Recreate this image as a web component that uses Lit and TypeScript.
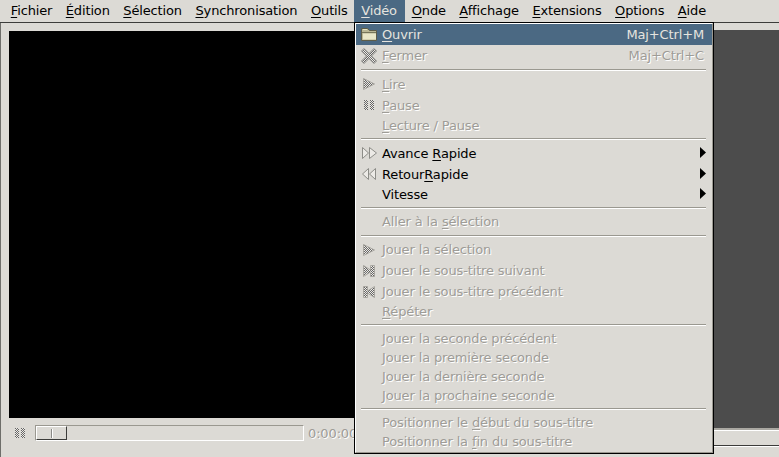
import { LitElement, html, css, svg } from "lit";
import { customElement } from "lit/decorators.js";

const stipple = (color = "#777773") => svg`<defs><pattern id="st" width="2" height="2" patternUnits="userSpaceOnUse"><rect width="2" height="2" fill="#eceae6"/><rect width="1" height="1" fill="${color}"/><rect x="1" y="1" width="1" height="1" fill="${color}"/></pattern></defs>`;

const ICONS: Record<string, unknown> = {
  folder: svg`<path d="M0.5 1.5H6.5L8.5 3.5H15.5V13.5H0.5Z" fill="#b9b794" stroke="#5e5d48"/><path d="M2 6.5L15 6.5V12.5H2Z" fill="#e9e7c8"/><path d="M1 5.5H15" stroke="#77765a"/><path d="M2 2.5H6" stroke="#e4e2c4"/>`,
  close: svg`${stipple("#444")}<path d="M3 0.5L8 5.5L13 0.5L15.5 3L10.5 8L15.5 13L13 15.5L8 10.5L3 15.5L0.5 13L5.5 8L0.5 3Z" fill="url(#st)" stroke="#8a8a86"/>`,
  play: svg`${stipple("#9a9a96")}<path d="M2.5 2.5L13.5 8L2.5 13.5Z" fill="url(#st)" stroke="#a8a6a0"/>`,
  pause: svg`${stipple("#666")}<rect x="3" y="3" width="4" height="10" fill="url(#st)" /><rect x="9" y="3" width="4" height="10" fill="url(#st)"/>`,
  forward: svg`<path d="M1.5 2.5L7.5 8L1.5 13.5Z M8.5 2.5L15.5 8L8.5 13.5Z" fill="#eceae6" stroke="#8d8d88"/>`,
  rewind: svg`<path d="M14.5 2.5L8.5 8L14.5 13.5Z M7.5 2.5L1.5 8L7.5 13.5Z" fill="#eceae6" stroke="#8d8d88"/>`,
  next: svg`${stipple("#9a9a96")}<path d="M2.5 2.5L9.5 7V2.5H13.5V13.5H9.5V9L2.5 13.5Z" fill="url(#st)" stroke="#a8a6a0"/>`,
  prev: svg`${stipple("#9a9a96")}<path d="M13.5 2.5L6.5 7V2.5H2.5V13.5H6.5V9L13.5 13.5Z" fill="url(#st)" stroke="#a8a6a0"/>`,
};

type Row = { t?: unknown; h?: number; i?: string; k?: string; off?: boolean; sel?: boolean; sub?: boolean; low?: boolean };
const m = (pre: string, c: string, post: string) => html`${pre}<u>${c}</u>${post}`;

const ROWS: Row[] = [
  { t: m("", "O", "uvrir"), h: 21, i: "folder", k: "Maj+Ctrl+M", sel: true },
  { t: m("", "F", "ermer"), h: 21, i: "close", k: "Maj+Ctrl+C", off: true },
  {},
  { t: m("", "L", "ire"), h: 21, i: "play", off: true, low: true },
  { t: m("", "P", "ause"), h: 21, i: "pause", off: true, low: true },
  { t: m("", "L", "ecture / Pause"), h: 20, off: true },
  {},
  { t: m("Avance ", "R", "apide"), h: 21, i: "forward", sub: true, low: true },
  { t: m("Retour", "R", "apide"), h: 21, i: "rewind", sub: true, low: true },
  { t: "Vitesse", h: 20, sub: true },
  {},
  { t: m("Aller à la ", "s", "élection"), h: 21, off: true },
  {},
  { t: "Jouer la sélection", h: 21, i: "play", off: true },
  { t: "Jouer le sous-titre suivant", h: 21, i: "next", off: true },
  { t: "Jouer le sous-titre précédent", h: 21, i: "prev", off: true },
  { t: m("", "R", "épéter"), h: 19, off: true },
  {},
  { t: "Jouer la seconde précédent", h: 20, off: true },
  { t: "Jouer la première seconde", h: 19, off: true },
  { t: "Jouer la dernière seconde", h: 19, off: true },
  { t: "Jouer la prochaine seconde", h: 19, off: true },
  {},
  { t: m("Positionner le ", "d", "ébut du sous-titre"), h: 20, off: true },
  { t: m("Positionner la ", "f", "in du sous-titre"), h: 19, off: true },
];

const BAR: [string, string, string, boolean?][] = [
  ["", "F", "ichier"],
  ["", "É", "dition"],
  ["", "S", "élection"],
  ["", "S", "ynchronisation"],
  ["", "O", "utils"],
  ["", "V", "idéo", true],
  ["", "O", "nde"],
  ["", "A", "ffichage"],
  ["", "E", "xtensions"],
  ["", "O", "ptions"],
  ["", "A", "ide"],
];

@customElement("app-root")
export class AppRoot extends LitElement {
  static styles = css`
    :host {
      display: block;
      position: relative;
      width: 779px;
      height: 457px;
      overflow: hidden;
      background: #dcdad5;
      font-family: "DejaVu Sans", sans-serif;
      font-size: 13px;
      letter-spacing: -0.14px;
      color: #000;
    }
    u { text-decoration-thickness: 1px; text-underline-offset: 2px; text-decoration-skip-ink: none; }
    .bar { display: flex; height: 22px; padding-left: 4px; border-bottom: 1px solid #3c3c3a; }
    .bi { padding: 0 6.75px; line-height: 21px; white-space: nowrap; height: 22px; box-sizing: border-box; }
    .bi.open { background: #4b6983; color: #e6e4df; padding-right: 8px; }
    .main { display: flex; height: 434px; border-left: 1px solid #6e6e6a; }
    .left { width: 700px; flex: none; padding: 8px 0 0 8px; box-sizing: border-box; display: flex; flex-direction: column; }
    .video { background: #000; height: 387px; flex: none; }
    .ctl { display: flex; align-items: center; height: 16px; margin-top: 7px; padding-left: 3px; }
    .ctl svg { width: 16px; height: 16px; flex: none; margin-right: 7px; }
    .trough { width: 269px; height: 16px; box-sizing: border-box; flex: none; background: #dcdad5; border: 1px solid; border-color: #9a9890 #fff #fff #9a9890; }
    .thumb { width: 31px; height: 14px; box-sizing: border-box; background: #dcdad5; border: 1px solid; border-color: #fff #3c3c3a #3c3c3a #fff; display: flex; justify-content: center; align-items: center; }
    .thumb i { display: block; width: 1px; height: 9px; background: #fff; border-left: 1px solid #8a8a86; }
    .time { color: #9e9c97; text-shadow: 1px 1px 0 #fff; margin-left: 4px; }
    .right { flex: 1; display: flex; flex-direction: column; padding-top: 7px; }
    .dark { height: 398px; background: #4c4c4c; flex: none; }
    .strip { height: 15px; flex: none; border-top: 2px solid #aaa8a2; }
    .strip::before { content: ""; display: block; height: 1px; background: #fff; }
    .foot { flex: 1; border-top: 1px solid #3c3c3a; }
    .foot::before { content: ""; display: block; height: 1px; background: #fff; }
    .menu {
      position: absolute; left: 354px; top: 22px; width: 360px; height: 432px;
      box-sizing: border-box; border: 1px solid #000; background: #dcdad5;
    }
    .bevel {
      height: 100%; box-sizing: border-box;
      border: 1px solid; border-color: #fff #9a9890 #9a9890 #fff;
    }
    .row { display: flex; align-items: center; position: relative; box-sizing: border-box; padding: 0 8px 0 26px; white-space: nowrap; }
    .row.low { padding-top: 2px; }
    .row svg.ic { position: absolute; left: 5px; top: 50%; margin-top: -8px; width: 16px; height: 16px; }
    .row.sel { background: #4b6983; color: #e6e4df; }
    .row.off { color: #9e9c97; text-shadow: 1px 1px 0 #fff; }
    .k { margin-left: auto; }
    .arrow { position: absolute; right: 6px; top: 50%; margin-top: -6px; width: 6px; height: 11px; }
    .sep { height: 7px; display: flex; align-items: center; padding: 0 6px 0 5px; }
    .sep i { display: block; flex: 1; height: 2px; box-sizing: border-box; border-top: 1px solid #9a9890; border-bottom: 1px solid #fff; }
  `;

  render() {
    return html`
      <div class="bar">
        ${BAR.map(([a, b, c, open]) => html`<div class="bi ${open ? "open" : ""}">${a}<u>${b}</u>${c}</div>`)}
      </div>
      <div class="main">
        <div class="left">
          <div class="video"></div>
          <div class="ctl">
            <svg viewBox="0 0 16 16">${ICONS.pause}</svg>
            <div class="trough"><div class="thumb"><i></i></div></div>
            <span class="time">0:00:00</span>
          </div>
        </div>
        <div class="right">
          <div class="dark"></div>
          <div class="strip"></div>
          <div class="foot"></div>
        </div>
      </div>
      <div class="menu"><div class="bevel">
        ${ROWS.map((r) =>
          r.t === undefined
            ? html`<div class="sep"><i></i></div>`
            : html`<div class="row ${r.off ? "off" : ""} ${r.sel ? "sel" : ""} ${r.low ? "low" : ""}" style="height:${r.h}px">
                ${r.i ? html`<svg class="ic" viewBox="0 0 16 16">${ICONS[r.i]}</svg>` : ""}
                <span>${r.t}</span>
                ${r.k ? html`<span class="k">${r.k}</span>` : ""}
                ${r.sub ? html`<svg class="arrow" viewBox="0 0 6 11"><path d="M0 0L6 5.5L0 11Z" fill="#000"/></svg>` : ""}
              </div>`
        )}
      </div></div>
    `;
  }
}
